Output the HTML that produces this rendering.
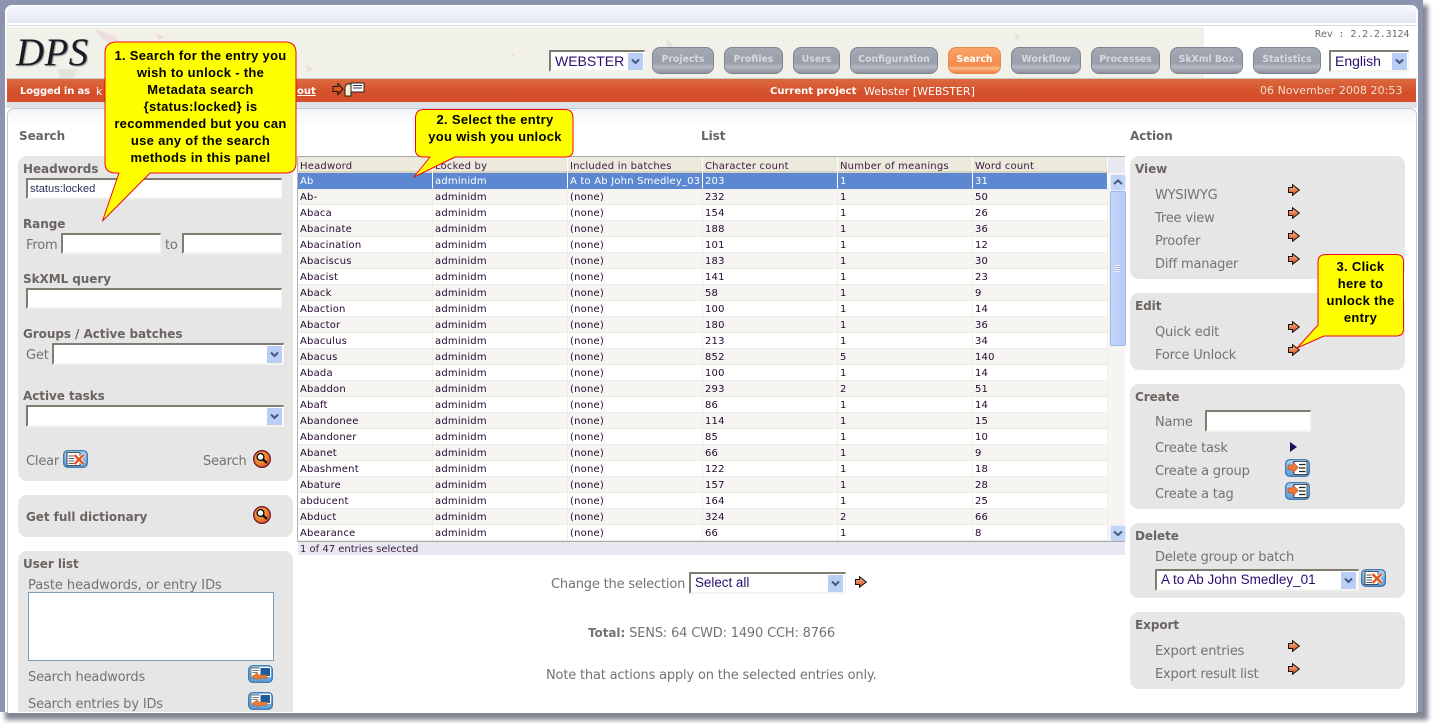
<!DOCTYPE html>
<html><head><meta charset="utf-8"><title>DPS</title>
<style>
html,body{margin:0;padding:0;background:#fff}
#p{position:relative;width:1435px;height:724px;overflow:hidden;background:#fff;font-family:"DejaVu Sans",sans-serif;font-size:13px;color:#737373;letter-spacing:-.18px}
#p div,#p svg{position:absolute}
.t{white-space:nowrap;line-height:16px;height:16px;margin-top:2px}
.h{white-space:nowrap;line-height:16px;height:16px;margin-top:1px;font-weight:bold;color:#6b6461;font-size:12px;letter-spacing:-.06px}
.g{background:#e6e6e6;border-radius:9px}
.i{background:#fff;border:2px solid #7d7d70;border-right:1px solid #f4f4ec;border-bottom:2px solid #f4f4ec;box-sizing:border-box}
.b{top:0;height:27px;box-sizing:border-box;border:1px solid #7e8593;border-radius:8px;background:linear-gradient(#a4a8b2 0,#9a9ea9 60%,#b6b9c2 75%,#8e929e 100%);color:#d6d9e0;font-weight:bold;font-size:9.3px;letter-spacing:0;text-align:center;line-height:23px;white-space:nowrap}
.dd{width:15px;height:17px;background:#b9cdf5;text-align:center}
.o{color:#fff;font-size:10px;letter-spacing:0;line-height:14px;height:14px;white-space:nowrap;top:84px}
table{position:absolute;left:298px;top:157px;width:810px;border-collapse:separate;border-spacing:0;table-layout:fixed;font-size:10px;color:#23082e;letter-spacing:.02em}
td,th{height:16px;padding:3px 0 0 2px;box-sizing:border-box;border-right:1px solid #efeee8;border-bottom:1px solid #ecebe6;font-weight:normal;text-align:left;white-space:nowrap;overflow:hidden;line-height:12px;vertical-align:top}
th{background:#ece9dd;border-right:1px solid #fff;border-bottom:2px solid #d8d4c5;color:#3a1a40;padding-top:6px;line-height:8px}
tr:nth-child(odd) td{background:#f6f5f1}
tr:nth-child(even) td{background:#fff}
tr.s td{background:#5b88d1!important;color:#fff;border-right:1px solid #fff;border-bottom:1px solid #5b88d1}
.c{font-family:"Liberation Sans",sans-serif;font-weight:bold;font-size:13px;color:#000;text-align:center;line-height:17px;letter-spacing:.3px;white-space:nowrap}
.s12{font-family:"Liberation Sans",sans-serif;color:#2a0f70;margin-top:0;letter-spacing:0}
</style></head><body><div id="p">
<svg width="0" height="0" style="left:0;top:0"><defs>
<linearGradient id="ao" x1="0" y1="0" x2="0" y2="1"><stop offset="0" stop-color="#f6b98e"/><stop offset="1" stop-color="#d9481c"/></linearGradient>
<linearGradient id="bb" x1="0" y1="0" x2="0" y2="1"><stop offset="0" stop-color="#a9d4f4"/><stop offset="1" stop-color="#5a9cd8"/></linearGradient>
<radialGradient id="mg" cx=".4" cy=".35" r=".7"><stop offset="0" stop-color="#fbc04a"/><stop offset="1" stop-color="#e2561e"/></radialGradient>
<symbol id="ar" viewBox="0 0 12 12"><path d="M.5 3.500H4.500V.7L11.300 6 4.500 11.300V8.500H.5Z" fill="url(#ao)" stroke="#111" stroke-width="1"/></symbol>
<symbol id="mag" viewBox="0 0 18 18"><circle cx="9" cy="9" r="8.300" fill="url(#mg)" stroke="#7a1230" stroke-width="1.300"/><circle cx="7.500" cy="7" r="3.400" fill="#fff" stroke="#111" stroke-width="1.400"/><path d="M10 9.500L14 13" stroke="#111" stroke-width="2.400"/></symbol>
<symbol id="bx" viewBox="0 0 25 18"><rect x=".7" y=".7" width="23.600" height="16.600" rx="4" fill="url(#bb)" stroke="#2f6ea8" stroke-width="1.200"/><path d="M4 2.500H17V15.500H4Z" fill="#fff" stroke="#222" stroke-width=".8"/><path d="M5.500 6H11M5.500 8.500H11M5.500 11H11M5.500 13.500H11" stroke="#555"/><path d="M11.500 5L20.500 14M20.500 5L11.500 14" stroke="#fff" stroke-width="4"/><path d="M11.500 5L20.500 14M20.500 5L11.500 14" stroke="#e2561e" stroke-width="2.400"/></symbol>
<symbol id="bl" viewBox="0 0 25 18"><rect x=".7" y=".7" width="23.600" height="16.600" rx="4" fill="url(#bb)" stroke="#2f6ea8" stroke-width="1.200"/><path d="M3 3H13V13H3Z" fill="#fff" stroke="#444" stroke-width=".7"/><path d="M4.500 5.500H11M4.500 7.500H9" stroke="#777"/><path d="M12 2.500H22.500V11.500H12Z" fill="#1f5c9e" stroke="#fff" stroke-width="1"/><path d="M4 11.500L10 7.500V10H19V13.500H10V15.700Z" fill="#ec7a35" stroke="#963" stroke-width=".5"/></symbol>
<symbol id="bc" viewBox="0 0 25 18"><rect x=".7" y=".7" width="23.600" height="16.600" rx="4" fill="url(#bb)" stroke="#2f6ea8" stroke-width="1.200"/><path d="M9 2.500H22V15.500H9Z" fill="#fff" stroke="#222" stroke-width=".8"/><path d="M14 5.500H20.500M14 9H20.500M14 12.500H20.500" stroke="#222" stroke-width="1.300"/><path d="M3 6H8V3L13.500 8.500 8 14V11H3Z" fill="#ec7a35" stroke="#a33" stroke-width=".5"/></symbol>
<symbol id="dn" viewBox="0 0 15 17"><path d="M4 6.500L7.500 10 11 6.500" fill="none" stroke="#44597c" stroke-width="2"/></symbol>
</defs></svg>

<!-- frame -->
<div style="left:5px;top:5px;width:1423px;height:715px;background:#6d7080;filter:blur(2.5px);opacity:.85"></div>
<div style="left:0;top:0;width:1423px;height:712px;background:#8b93ae"></div>
<div style="left:5px;top:5px;width:1413px;height:707px;background:#fff;border-radius:7px 7px 0 0"></div>
<div style="left:7px;top:6px;width:1409px;height:17px;background:linear-gradient(#f6f8fc,#e1e7f2);border-radius:6px 6px 0 0"></div>
<div style="left:6px;top:25px;width:1411px;height:1px;background:#d5d8de"></div>

<!-- header -->
<div style="left:6px;top:27px;width:1198px;height:51px;background:#f1f0e9"></div>
<svg width="1198" height="51" style="left:6px;top:27px"><g fill="#efdcdc"><path d="M90 2l20 8 8 12-12-3-12-9zM150 6l8 4-6 3zM300 38l8 4-6 3zM505 25l5 3-4 2zM1010 22l4 3-4 1z"/></g><g fill="#dfe6dc"><path d="M52 42h20l-4 9H54zM180 20l6 6-7 3zM660 10l8 10 8 3-14 2zM1010 6l5 6-6 0z"/></g></svg>
<div class="t" style="left:16px;top:32px;margin-top:0;font:italic 39px/42px 'Liberation Serif',serif;height:42px;color:#1a1a24;letter-spacing:.4px;text-shadow:1px 1px 1px #999">DPS</div>
<div class="t" style="left:1315px;top:25px;font:10px/16px 'DejaVu Sans Mono',monospace;color:#6a6a6a;letter-spacing:-.13px">Rev : 2.2.2.3124</div>

<div class="i" style="left:549px;top:50px;width:96px;height:22px"></div>
<div class="t s12" style="left:555px;top:53px;font-size:14px">WEBSTER</div>
<div class="dd" style="left:628px;top:53px"><svg width="15" height="17" style="left:0;top:0"><use href="#dn"/></svg></div>
<div class="i" style="left:1329px;top:50px;width:80px;height:22px"></div>
<div class="t s12" style="left:1335px;top:53px;font-size:14px">English</div>
<div class="dd" style="left:1392px;top:53px"><svg width="15" height="17" style="left:0;top:0"><use href="#dn"/></svg></div>

<div class="b" style="left:652px;top:47px;width:62px">Projects</div>
<div class="b" style="left:724px;top:47px;width:59px">Profiles</div>
<div class="b" style="left:793px;top:47px;width:47px">Users</div>
<div class="b" style="left:850px;top:47px;width:88px">Configuration</div>
<div class="b" style="left:948px;top:47px;width:53px;color:#fff;border-color:#e88850;background:linear-gradient(#f9a368,#f48c4c 70%,#fbbb8c 80%,#ee8040)">Search</div>
<div class="b" style="left:1011px;top:47px;width:70px">Workflow</div>
<div class="b" style="left:1091px;top:47px;width:69px">Processes</div>
<div class="b" style="left:1170px;top:47px;width:73px">SkXml Box</div>
<div class="b" style="left:1253px;top:47px;width:68px">Statistics</div>

<!-- orange bar -->
<div style="left:6px;top:78px;width:1411px;height:1px;background:#c8c8c4"></div>
<div style="left:7px;top:79px;width:1409px;height:23px;background:linear-gradient(#dc6a3e,#d44f2a 60%,#d44f2a)"></div>
<div style="left:6px;top:102px;width:1411px;height:6px;background:#dfe2e6"></div>
<div class="o" style="left:20px;top:85px;font-weight:bold;letter-spacing:-.15px">Logged in as</div>
<div class="o" style="left:96px;top:85px;font-size:11px">k</div>
<div class="o" style="left:297px;top:85px;font-weight:bold;text-decoration:underline">out</div>
<svg width="34" height="16" viewBox="0 0 34 16" style="left:332px;top:82px"><path d="M1 4.500H6V1.500L11 7 6 12.500V9.500H1Z" fill="#e2561e" stroke="#111"/><path d="M13 5L15 2H19V14H13Z" fill="#f5f0d0" stroke="#222"/><path d="M19 1H32V10H19Z" fill="#fff" stroke="#222"/><path d="M21 3.500H30M21 6H30" stroke="#334"/></svg>
<div class="o" style="left:770px;top:85px;font-weight:bold">Current project</div>
<div class="o" style="left:864px;top:85px;font-size:11px">Webster [WEBSTER]</div>
<div class="o" style="left:1260px;top:84px;font-size:11px;letter-spacing:.05px;color:#f4dccf">06 November 2008 20:53</div>

<!-- content -->
<div style="left:7px;top:108px;width:1408px;height:604px;border:1px solid #c6cad2;border-bottom:0;border-radius:7px 7px 0 0;background:linear-gradient(#f4f5f6 0,#fff 17px)"></div>
<div class="h" style="left:19px;top:127px">Search</div>
<div class="h" style="left:701px;top:127px">List</div>
<div class="h" style="left:1130px;top:127px">Action</div>

<!-- left -->
<div class="g" style="left:18px;top:156px;width:275px;height:325px"></div>
<div class="h" style="left:23px;top:160px">Headwords</div>
<div class="i" style="left:26px;top:178px;width:256px;height:21px"></div>
<div class="t" style="left:30px;top:181px;margin-top:0;font:11.2px/16px 'Liberation Sans',sans-serif;letter-spacing:0;color:#2a2f60">status:locked</div>
<div class="h" style="left:23px;top:215px">Range</div>
<div class="t" style="left:26px;top:236px">From</div>
<div class="i" style="left:61px;top:233px;width:100px;height:21px"></div>
<div class="t" style="left:165px;top:236px">to</div>
<div class="i" style="left:182px;top:233px;width:100px;height:21px"></div>
<div class="h" style="left:23px;top:270px">SkXML query</div>
<div class="i" style="left:26px;top:288px;width:256px;height:21px"></div>
<div class="h" style="left:23px;top:325px">Groups / Active batches</div>
<div class="t" style="left:26px;top:346px">Get</div>
<div class="i" style="left:52px;top:343px;width:232px;height:22px"></div>
<div class="dd" style="left:267px;top:346px"><svg width="15" height="17" style="left:0;top:0"><use href="#dn"/></svg></div>
<div class="h" style="left:23px;top:387px">Active tasks</div>
<div class="i" style="left:26px;top:405px;width:258px;height:22px"></div>
<div class="dd" style="left:267px;top:408px"><svg width="15" height="17" style="left:0;top:0"><use href="#dn"/></svg></div>
<div class="t" style="left:26px;top:452px">Clear</div>
<svg width="25" height="18" style="left:63px;top:450px"><use href="#bx"/></svg>
<div class="t" style="left:203px;top:452px">Search</div>
<svg width="18" height="18" style="left:253px;top:450px"><use href="#mag"/></svg>

<div class="g" style="left:18px;top:495px;width:275px;height:42px"></div>
<div class="h" style="left:26px;top:508px">Get full dictionary</div>
<svg width="18" height="18" style="left:253px;top:506px"><use href="#mag"/></svg>

<div class="g" style="left:18px;top:551px;width:275px;height:161px;border-radius:9px 9px 0 0"></div>
<div class="h" style="left:23px;top:555px">User list</div>
<div class="t" style="left:28px;top:576px;letter-spacing:-.05px">Paste headwords, or entry IDs</div>
<div style="left:28px;top:592px;width:244px;height:67px;background:#fff;border:1px solid #7f9db9"></div>
<div class="t" style="left:28px;top:668px">Search headwords</div>
<svg width="25" height="18" style="left:248px;top:665px"><use href="#bl"/></svg>
<div class="t" style="left:28px;top:695px">Search entries by IDs</div>
<svg width="25" height="18" style="left:248px;top:692px"><use href="#bl"/></svg>

<!-- table -->
<div style="left:297px;top:156px;width:828px;height:1px;background:#a9a9a9"></div>
<div style="left:297px;top:156px;width:1px;height:386px;background:#b5b5b5"></div>
<table>
<colgroup><col style="width:135px"><col style="width:135px"><col style="width:135px"><col style="width:135px"><col style="width:135px"><col style="width:135px"></colgroup>
<tr><th>Headword</th><th>Locked by</th><th>Included in batches</th><th>Character count</th><th>Number of meanings</th><th>Word count</th></tr>
<tr class="s"><td>Ab</td><td>adminidm</td><td>A to Ab John Smedley_03</td><td>203</td><td>1</td><td>31</td></tr>
<tr><td>Ab-</td><td>adminidm</td><td>(none)</td><td>232</td><td>1</td><td>50</td></tr>
<tr><td>Abaca</td><td>adminidm</td><td>(none)</td><td>154</td><td>1</td><td>26</td></tr>
<tr><td>Abacinate</td><td>adminidm</td><td>(none)</td><td>188</td><td>1</td><td>36</td></tr>
<tr><td>Abacination</td><td>adminidm</td><td>(none)</td><td>101</td><td>1</td><td>12</td></tr>
<tr><td>Abaciscus</td><td>adminidm</td><td>(none)</td><td>183</td><td>1</td><td>30</td></tr>
<tr><td>Abacist</td><td>adminidm</td><td>(none)</td><td>141</td><td>1</td><td>23</td></tr>
<tr><td>Aback</td><td>adminidm</td><td>(none)</td><td>58</td><td>1</td><td>9</td></tr>
<tr><td>Abaction</td><td>adminidm</td><td>(none)</td><td>100</td><td>1</td><td>14</td></tr>
<tr><td>Abactor</td><td>adminidm</td><td>(none)</td><td>180</td><td>1</td><td>36</td></tr>
<tr><td>Abaculus</td><td>adminidm</td><td>(none)</td><td>213</td><td>1</td><td>34</td></tr>
<tr><td>Abacus</td><td>adminidm</td><td>(none)</td><td>852</td><td>5</td><td>140</td></tr>
<tr><td>Abada</td><td>adminidm</td><td>(none)</td><td>100</td><td>1</td><td>14</td></tr>
<tr><td>Abaddon</td><td>adminidm</td><td>(none)</td><td>293</td><td>2</td><td>51</td></tr>
<tr><td>Abaft</td><td>adminidm</td><td>(none)</td><td>86</td><td>1</td><td>14</td></tr>
<tr><td>Abandonee</td><td>adminidm</td><td>(none)</td><td>114</td><td>1</td><td>15</td></tr>
<tr><td>Abandoner</td><td>adminidm</td><td>(none)</td><td>85</td><td>1</td><td>10</td></tr>
<tr><td>Abanet</td><td>adminidm</td><td>(none)</td><td>66</td><td>1</td><td>9</td></tr>
<tr><td>Abashment</td><td>adminidm</td><td>(none)</td><td>122</td><td>1</td><td>18</td></tr>
<tr><td>Abature</td><td>adminidm</td><td>(none)</td><td>157</td><td>1</td><td>28</td></tr>
<tr><td>abducent</td><td>adminidm</td><td>(none)</td><td>164</td><td>1</td><td>25</td></tr>
<tr><td>Abduct</td><td>adminidm</td><td>(none)</td><td>324</td><td>2</td><td>66</td></tr>
<tr><td>Abearance</td><td>adminidm</td><td>(none)</td><td>66</td><td>1</td><td>8</td></tr>
</table>
<!-- scrollbar -->
<div style="left:1108px;top:157px;width:17px;height:16px;background:#e8e8f0"></div>
<div style="left:1108px;top:173px;width:17px;height:368px;background:#f6f5f1"></div>
<div style="left:1110px;top:174px;width:14px;height:15px;background:#c3d4f7;border:1px solid #e8effc;box-sizing:content-box;border-radius:2px"><svg width="14" height="15" style="left:0;top:0"><path d="M3 9L7 5.500 11 9" fill="none" stroke="#44597c" stroke-width="2"/></svg></div>
<div style="left:1110px;top:191px;width:14px;height:153px;background:linear-gradient(90deg,#c4d6f9,#b6cbf5);border:1px solid #9db8e8;border-radius:2px"></div>
<div style="left:1114px;top:265px;width:6px;height:7px;background:repeating-linear-gradient(#eef3fd 0,#eef3fd 1px,#a7bde8 1px,#a7bde8 2px)"></div>
<div style="left:1110px;top:525px;width:14px;height:15px;background:#c3d4f7;border:1px solid #e8effc;border-radius:2px"><svg width="14" height="15" style="left:0;top:0"><path d="M3 5.500L7 9 11 5.500" fill="none" stroke="#44597c" stroke-width="2"/></svg></div>
<div style="left:298px;top:541px;width:827px;height:1px;background:#a9a9a9"></div>
<div style="left:298px;top:542px;width:827px;height:13px;background:#e8e8f0"></div>
<div class="t" style="left:300px;top:540px;font-size:10px;color:#3a1a40;letter-spacing:0">1 of 47 entries selected</div>

<!-- center -->
<div class="t" style="left:551px;top:575px">Change the selection</div>
<div class="i" style="left:689px;top:572px;width:157px;height:22px"></div>
<div class="t s12" style="left:695px;top:575px;font-size:13.400px">Select all</div>
<div class="dd" style="left:828px;top:575px"><svg width="15" height="17" style="left:0;top:0"><use href="#dn"/></svg></div>
<svg width="12" height="12" style="left:855px;top:576px"><use href="#ar"/></svg>
<div class="t" style="left:588px;top:623px"><b style="font-size:12px;letter-spacing:-.06px">Total:</b> SENS: 64 CWD: 1490 CCH: 8766</div>
<div class="t" style="left:546px;top:666px">Note that actions apply on the selected entries only.</div>

<!-- right -->
<div class="g" style="left:1130px;top:156px;width:275px;height:123px"></div>
<div class="h" style="left:1135px;top:160px">View</div>
<div class="t" style="left:1155px;top:186px">WYSIWYG</div>
<div class="t" style="left:1155px;top:209px">Tree view</div>
<div class="t" style="left:1155px;top:232px">Proofer</div>
<div class="t" style="left:1155px;top:255px">Diff manager</div>
<svg width="12" height="12" style="left:1288px;top:184px"><use href="#ar"/></svg>
<svg width="12" height="12" style="left:1288px;top:207px"><use href="#ar"/></svg>
<svg width="12" height="12" style="left:1288px;top:230px"><use href="#ar"/></svg>
<svg width="12" height="12" style="left:1288px;top:253px"><use href="#ar"/></svg>

<div class="g" style="left:1130px;top:293px;width:275px;height:77px"></div>
<div class="h" style="left:1135px;top:297px">Edit</div>
<div class="t" style="left:1155px;top:323px">Quick edit</div>
<div class="t" style="left:1155px;top:346px">Force Unlock</div>
<svg width="12" height="12" style="left:1288px;top:321px"><use href="#ar"/></svg>
<svg width="12" height="12" style="left:1288px;top:344px"><use href="#ar"/></svg>

<div class="g" style="left:1130px;top:384px;width:275px;height:125px"></div>
<div class="h" style="left:1135px;top:388px">Create</div>
<div class="t" style="left:1155px;top:413px">Name</div>
<div class="i" style="left:1205px;top:410px;width:106px;height:22px"></div>
<div class="t" style="left:1155px;top:439px">Create task</div>
<svg width="8" height="10" style="left:1290px;top:442px"><path d="M0 0L7 5 0 10Z" fill="#14145a"/></svg>
<div class="t" style="left:1155px;top:462px">Create a group</div>
<svg width="25" height="18" style="left:1285px;top:459px"><use href="#bc"/></svg>
<div class="t" style="left:1155px;top:485px">Create a tag</div>
<svg width="25" height="18" style="left:1285px;top:482px"><use href="#bc"/></svg>

<div class="g" style="left:1130px;top:523px;width:275px;height:75px"></div>
<div class="h" style="left:1135px;top:527px">Delete</div>
<div class="t" style="left:1155px;top:548px">Delete group or batch</div>
<div class="i" style="left:1155px;top:569px;width:204px;height:22px"></div>
<div class="t s12" style="left:1161px;top:572px;font-size:13.500px">A to Ab John Smedley_01</div>
<div class="dd" style="left:1341px;top:572px"><svg width="15" height="17" style="left:0;top:0"><use href="#dn"/></svg></div>
<svg width="25" height="18" style="left:1361px;top:569px"><use href="#bx"/></svg>

<div class="g" style="left:1130px;top:612px;width:275px;height:77px"></div>
<div class="h" style="left:1135px;top:616px">Export</div>
<div class="t" style="left:1155px;top:642px">Export entries</div>
<div class="t" style="left:1155px;top:665px">Export result list</div>
<svg width="12" height="12" style="left:1288px;top:640px"><use href="#ar"/></svg>
<svg width="12" height="12" style="left:1288px;top:663px"><use href="#ar"/></svg>

<!-- callouts -->
<svg width="1435" height="724" style="left:0;top:0">
<g fill="#ffff00" stroke="#ee0a1e" stroke-width="1" stroke-linejoin="round">
<path d="M117 42H285Q296 42 296 53V163Q296 173 285 173H150L102.500 221L119 173H116Q105 173 105 163V53Q105 42 117 42Z"/>
<path d="M424 109.500H565Q573 109.500 573 118V150Q573 157 565 157H455L414 177 430 157H424Q415.500 157 415.500 150V118Q415.500 109.500 424 109.500Z"/>
<path d="M1326 254.500H1396Q1403.500 254.500 1403.500 262V329Q1403.500 336 1396 336H1324L1297 348 1318 325V262Q1318 254.500 1326 254.500Z"/>
</g></svg>
<div class="c" style="left:105px;top:47px;width:191px">1. Search for the entry you<br>wish to unlock - the<br>Metadata search<br>{status:locked} is<br>recommended but you can<br>use any of the search<br>methods in this panel</div>
<div class="c" style="left:415px;top:111px;width:160px">2. Select the entry<br>you wish you unlock</div>
<div class="c" style="left:1318px;top:258px;width:85px">3. Click<br>here to<br>unlock the<br>entry</div>
</div></body></html>
